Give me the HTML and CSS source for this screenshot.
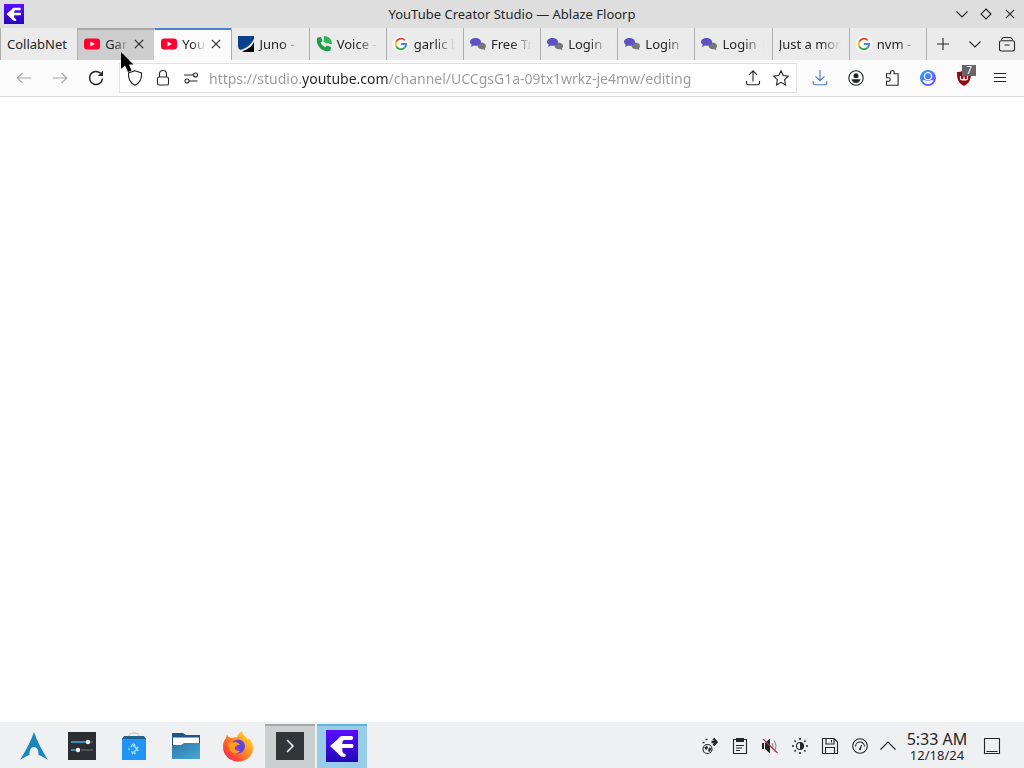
FILE: index.html
```
<!DOCTYPE html>
<html lang="en">

<head>
    <meta charset="utf-8">
    <meta name="viewport" content="width=device-width, initial-scale=1.0">
    <title>YouTube Creator Studio — Ablaze Floorp</title>

    <link rel="stylesheet" href="styles.css">

</head>

<body>

    <!-- shared icons -->
    <svg class="sprite" aria-hidden="true">
        <defs>
            <linearGradient id="floorp-bg" x1="0" y1="0" x2="0" y2="1">
                <stop offset="0" stop-color="#5a0cff" />
                <stop offset="1" stop-color="#2408b8" />
            </linearGradient>
            <symbol id="floorp" viewBox="0 0 32 32">
                <path fill="url(#floorp-bg)" d="M0 0h32v32H0z" />
                <path fill="#fff" d="M4 16 12 9C13.500 6.500 15 6 17.500 6h8.500q2.500 1.800 0 4H18.500c-1.500 0-2.200 1-2.200 4h10.200q2 2 0 4H16.300v2c0 2.500 1 3.400 2.700 3.800 1.500 1.500.5 3.700-1.500 3.200-3-.5-4.500-1.800-5.500-3.500z" />
            </symbol>
            <symbol id="youtube" viewBox="0 0 16 16">
                <rect y="2.500" width="16" height="11" rx="3" fill="#ff0033" />
                <path fill="#fff" d="M6.500 5.500v5L10.800 8z" />
            </symbol>
            <symbol id="google" viewBox="0 0 16 16">
                <circle cx="8" cy="8" r="8" fill="#fff" />
                <g fill="none" stroke-width="1.900">
                    <path stroke="#ea4335" d="M3.200 5.700A5.200 5.200 0 0 1 11.800 4.400" />
                    <path stroke="#fbbc05" d="M3.200 10.300a5.200 5.200 0 0 1 0-4.600" />
                    <path stroke="#34a853" d="M11.500 11.800A5.200 5.200 0 0 1 3.200 10.300" />
                    <path stroke="#4285f4" d="M8 8h5.100c0 1.700-.5 2.900-1.600 3.800" />
                </g>
            </symbol>
            <symbol id="chat" viewBox="0 0 16 16">
                <path fill="#777" d="M11 6.500c3 0 5 1.500 5 3.500 0 1-.5 1.800-1.200 2.400L15.500 14 13 13.200c-3 .3-5.500-1.200-5.500-3.200S9 6.500 11 6.500z" />
                <path fill="#5f51c4" d="M5.500 2C8.600 2 11 3.600 11 5.900S8.600 9.700 5.500 9.700L4 9.600 1.200 11l.4-2.600C.6 7.700 0 6.900 0 5.900 0 3.600 2.400 2 5.500 2z" />
            </symbol>
            <symbol id="close" viewBox="0 0 16 16">
                <path d="m3.800 3.800 8.400 8.400m0-8.400-8.400 8.400" />
            </symbol>
            <symbol id="down" viewBox="0 0 16 16">
                <path d="m2.500 5.500 5.500 5.500 5.500-5.500" />
            </symbol>
        </defs>
    </svg>

    <header class="titlebar">
        <svg class="app-icon"><use href="#floorp" /></svg>
        <h1>YouTube Creator Studio — Ablaze Floorp</h1>
        <div class="window-buttons">
            <button class="window-button" aria-label="Minimize"><svg class="icon"><use href="#down" /></svg></button>
            <button class="window-button" aria-label="Maximize"><svg class="icon" viewBox="0 0 16 16"><path d="m8 3 5 5-5 5-5-5z" /></svg></button>
            <button class="window-button" aria-label="Close"><svg class="icon"><use href="#close" /></svg></button>
        </div>
    </header>

    <nav class="tabbar">
        <div class="tabs">
            <div class="tab"><button class="tab-name full">CollabNet</button></div>
            <div class="tab hovered">
                <button class="tab-name"><svg class="favicon"><use href="#youtube" /></svg><span>Gar</span></button>
                <button class="tab-close" aria-label="Close tab"><svg class="icon"><use href="#close" /></svg></button>
            </div>
            <div class="tab selected">
                <button class="tab-name"><svg class="favicon"><use href="#youtube" /></svg><span>You</span></button>
                <button class="tab-close" aria-label="Close tab"><svg class="icon"><use href="#close" /></svg></button>
            </div>
            <div class="tab">
                <button class="tab-name"><svg class="favicon" viewBox="0 0 16 16"><path fill="#0b408c" d="M0 0h16v3C12 10 8 12 2.500 14 .8 13 0 12 0 10z" /><path fill="#000" d="M16 6v10H7c-1 0-2-.3-3-.8C10 13.500 13.500 11 16 6z" /></svg><span>Juno -</span></button>
            </div>
            <div class="tab">
                <button class="tab-name"><svg class="favicon" viewBox="0 0 16 16"><path fill="#1f9d4b" d="M1.500 1.500 5 1l1.500 4-2 1.500c1 2 2.500 3.500 4.700 4.800L11 9.500l4 1.500-.5 3.500C8 17.500-1.500 10 1.500 1.500z" /><path fill="#2fb35b" d="M8 0c4.500 0 8 3.500 8 8h-2.500l-1-1-3 .5L9 6l-1.500.3z" /></svg><span>Voice -</span></button>
            </div>
            <div class="tab"><button class="tab-name"><svg class="favicon"><use href="#google" /></svg><span>garlic b</span></button></div>
            <div class="tab"><button class="tab-name"><svg class="favicon"><use href="#chat" /></svg><span>Free Tr</span></button></div>
            <div class="tab"><button class="tab-name"><svg class="favicon"><use href="#chat" /></svg><span>Login |</span></button></div>
            <div class="tab"><button class="tab-name"><svg class="favicon"><use href="#chat" /></svg><span>Login |</span></button></div>
            <div class="tab"><button class="tab-name"><svg class="favicon"><use href="#chat" /></svg><span>Login |</span></button></div>
            <div class="tab"><button class="tab-name"><span>Just a mom</span></button></div>
            <div class="tab"><button class="tab-name"><svg class="favicon"><use href="#google" /></svg><span>nvm -</span></button></div>
        </div>
        <button class="tab-tool" aria-label="New tab"><svg class="icon" viewBox="0 0 16 16"><path d="M8 2v12M2 8h12" /></svg></button>
        <button class="tab-tool" aria-label="List all tabs"><svg class="icon"><use href="#down" /></svg></button>
        <button class="tab-tool" aria-label="Recent tabs"><svg class="icon" viewBox="0 0 16 16"><path d="M2.500 3.800Q3 1.500 5 1.500h6q2 0 2.500 2.300M2.200 4.800h11.600q1.700 0 1.700 1.700v6.800q0 1.700-1.700 1.700H2.200q-1.700 0-1.700-1.700V6.500q0-1.700 1.700-1.700zM5.500 9h5" /></svg></button>
    </nav>

    <div class="toolbar">
        <button class="tool faded" aria-label="Back"><svg class="icon" viewBox="0 0 16 16"><path d="M15.500 8H1.200M6.500 3 1.200 8l5.300 5" /></svg></button>
        <button class="tool faded" aria-label="Forward"><svg class="icon" viewBox="0 0 16 16"><path d="M.5 8h14.300M9.500 3l5.300 5-5.300 5" /></svg></button>
        <button class="tool" aria-label="Reload"><svg class="icon bold" viewBox="0 0 16 16"><path d="M14.500 8.500A6.500 6.500 0 1 1 12.500 3.300" /><path class="solid" d="M15 .800V6H9.800z" /></svg></button>

        <form class="urlbar">
            <button type="button" class="url-tool" aria-label="Tracking protection"><svg class="icon" viewBox="0 0 16 16"><path d="M8 .700 14.500 3c.5 5.500-1.500 9.700-6.500 12.300C3 12.700 1 8.500 1.500 3z" /></svg></button>
            <button type="button" class="url-tool" aria-label="Site information"><svg class="icon" viewBox="0 0 16 16"><rect x="2.500" y="7" width="11" height="8" rx="1.500" /><path d="M4.500 7V4a3.500 3.500 0 0 1 7 0v3" /></svg></button>
            <button type="button" class="url-tool" aria-label="Permissions"><svg class="icon" viewBox="0 0 16 16"><circle cx="12.500" cy="5" r="2" /><circle cx="4" cy="11" r="2" /><path d="M1 5h9.500M6 11h8.500" /></svg></button>
            <input class="url" type="text" aria-label="Address" spellcheck="false" value="https://studio.youtube.com/channel/UCCgsG1a-09tx1wrkz-je4mw/editing">
            <button type="button" class="url-tool" aria-label="Share"><svg class="icon" viewBox="0 0 16 16"><path d="M8 11.500V.8M4 4.800l4-4 4 4M1.500 11v2q0 1.700 1.700 1.700h9.600q1.700 0 1.700-1.700v-2" /></svg></button>
            <button type="button" class="url-tool" aria-label="Bookmark"><svg class="icon" viewBox="0 0 16 16"><path d="m8 .8 2.200 4.700 5.100.6-3.700 3.500.9 5.300L8 12.300l-4.500 2.600.9-5.300L.7 6.100l5.100-.6z" /></svg></button>
        </form>

        <button class="tool download" aria-label="Downloads"><svg class="icon" viewBox="0 0 16 16"><path d="M8 0v10.500M3.500 6.300 8 10.700l4.500-4.400M1.200 11v2q0 1.700 1.700 1.700h10.200q1.700 0 1.700-1.700v-2" /></svg></button>
        <button class="tool" aria-label="Account"><svg class="icon" viewBox="0 0 16 16"><circle cx="8" cy="8" r="7.200" /><circle class="solid" cx="8" cy="5.800" r="2.500" /><path class="solid" d="M3.500 9.300h9c-.5 2.400-2.200 3.700-4.500 3.700s-4-1.300-4.500-3.700z" /></svg></button>
        <button class="tool" aria-label="Extensions"><svg class="icon" viewBox="0 0 16 16"><path d="M2.500 6.500V3.800h4V2.300a1.800 1.800 0 0 1 3.600 0v1.500h4v11.400H2.500v-4h2a1.700 1.700 0 0 0 0-3.500h-2z" /></svg></button>
        <button class="tool" aria-label="Profile">
            <svg class="avatar" viewBox="0 0 16 16">
                <linearGradient id="profile-bg" x1="0" y1="0" x2="1" y2="1">
                    <stop offset="0" stop-color="#16a9ff" />
                    <stop offset="1" stop-color="#8743ff" />
                </linearGradient>
                <circle cx="8" cy="8" r="8" fill="url(#profile-bg)" />
                <circle cx="8" cy="6.300" r="3.600" fill="none" stroke="#fff" stroke-width="1.300" />
                <path fill="#fff" d="M2.500 10.500q2.500-1 3 0 2.500 1 5 0 .5-1 3 0C12.500 12.800 10.500 14 8 14s-4.500-1.200-5.500-3.500z" />
            </svg>
        </button>
        <button class="tool ublock" aria-label="uBlock Origin">
            <svg class="avatar" viewBox="0 0 16 16">
                <path fill="#900a13" d="M8 0c2 1.500 4 2 7 2 0 7-1 11-7 14C2 13 1 9 1 2c3 0 5-.5 7-2z" />
                <path fill="none" stroke="#fff" stroke-width="1.200" d="M4.500 6v2.200a1.700 1.700 0 0 0 3.500 0V6.500v1.700a1.700 1.700 0 0 0 3.500 0V6" />
            </svg>
            <span class="badge">7</span>
        </button>
        <button class="tool" aria-label="Menu"><svg class="icon" viewBox="0 0 16 16"><path d="M2 3.500h12M2 7.500h12M2 11.500h12" /></svg></button>
    </div>

    <main class="page"></main>

    <footer class="panel">
        <button class="launcher" aria-label="Application launcher">
            <svg class="app" viewBox="0 0 32 32"><path fill="#1d85bd" d="M16 2c3 8 7 17 14 28-4-2.500-6.500-4-9.500-5 .3-5-1.500-8-4.500-8s-4.800 3-4.500 8c-3 1-5.500 2.500-9.500 5C9 19 13 10 16 2z" /></svg>
        </button>
        <div class="tasks">
            <button class="task" aria-label="System Settings">
                <svg class="app" viewBox="0 0 32 32"><path fill="#2b2f34" d="M2 2h28v28H2z" /><path stroke="#3daee9" stroke-width="1.500" d="M5 12h15M5 20h7" /><path stroke="#75797d" d="M24 12h3M15 20h12" /><circle cx="22" cy="12" r="2.200" fill="#fff" /><circle cx="12" cy="20" r="2.200" fill="#fff" /></svg>
            </button>
            <button class="task" aria-label="Discover">
                <svg class="app" viewBox="0 0 32 32">
                    <path fill="none" stroke="#b4b9bd" d="M11 8V5.500Q11 3 16 3t5 2.500V8" />
                    <path fill="#2294f5" d="M4 8h24v22H4z" />
                    <path fill="#20648f" d="M6 6h20l2 3H4z" />
                    <g fill="none" stroke="#9bdcff" stroke-width="1.500"><path d="m14 14 5 5-5 5" /><path stroke-dasharray="2 2" d="m16 14 5 5-5 5-5-5z" /></g>
                </svg>
            </button>
            <button class="task" aria-label="Files">
                <svg class="app" viewBox="0 0 32 32">
                    <linearGradient id="folder-front" x1="0" y1="0" x2="1" y2="1">
                        <stop offset="0" stop-color="#2e76aa" />
                        <stop offset="1" stop-color="#4aa8d3" />
                    </linearGradient>
                    <path fill="#1f5584" d="M2 3h11l3 2h14v13H2z" /><path fill="#fff" d="M3 7.500h26V17H3z" /><path fill="url(#folder-front)" d="M2 15h9l3-2h16v16H2z" />
                </svg>
            </button>
            <button class="task" aria-label="Firefox">
                <svg class="app" viewBox="0 0 32 32">
                    <linearGradient id="fox" x1="1" y1="0" x2="0" y2="1">
                        <stop offset="0" stop-color="#fff14a" />
                        <stop offset=".4" stop-color="#ff9a1f" />
                        <stop offset=".75" stop-color="#ff4638" />
                        <stop offset="1" stop-color="#e52274" />
                    </linearGradient>
                    <path fill="url(#fox)" d="M5 4.500c1 2 2 3 4 3.500 2 0 3-1 6-1 1-3 3-5 5-6 0 4 4 5 6 9l.5-2C30 11 31 14 31 18c0 8-6.500 13.500-15 13.500S1 25 1 17c0-4 1-7 3-9z" />
                    <circle cx="16" cy="16.500" r="7" fill="#8f3dcc" />
                    <path fill="#5a46df" d="M16 10c6 0 8 6 5 10-1 2-3 3-5 3 3-3 2-6-1-7 0-3-1-4 1-6z" />
                    <path fill="#ff9e18" d="M6 13c3-1 5 0 7-1 2 0 4 1 5 3-3-.5-4 1-5 2-1 3 2 4 5 4-4 5-12 2-12-8z" />
                </svg>
            </button>
            <button class="task open" aria-label="Konsole">
                <svg class="app" viewBox="0 0 32 32"><path fill="#31363b" d="M2 2h28v28H2z" /><path fill="none" stroke="#fff" stroke-width="1.500" d="m13 10 6 6-6 6" /></svg>
            </button>
            <button class="task current" aria-label="Floorp"><svg class="app"><use href="#floorp" /></svg></button>
        </div>

        <div class="tray">
            <button class="tray-item" aria-label="Updates"><svg class="icon" viewBox="0 0 16 16"><circle cx="5.500" cy="11" r="4.500" /><path class="solid" d="m2.500 9 2.500-1 1 1.500L4.500 12 3 11zM7 9.500l2.500 1L7.500 14l-1.500-1z" /><path stroke-width="2.400" d="m11.500.500 3 3.500-3 3.500M9.500 4h5" /><path stroke-width="1.600" d="M.5 4.500h2M3.500 1.500h2" /></svg></button>
            <button class="tray-item" aria-label="Clipboard"><svg class="icon" viewBox="0 0 16 16"><path d="M1.500 1.500h13v14h-13zM4 7.500h8M4 10h6M4 12.500h4" /><path class="solid" d="M4 0h8v4H4z" /></svg></button>
            <button class="tray-item" aria-label="Volume muted"><svg class="icon" viewBox="0 0 16 16"><path class="solid" d="M0 5h2v6H0zM3 5l5-4.500v15L3 11z" /><path stroke="#888" d="M10 5q2 3 0 6M12 2.500q4 5.500 0 11" /><path stroke="#a53b45" d="m1 1 14.500 14" /></svg></button>
            <button class="tray-item" aria-label="Brightness"><svg class="icon" viewBox="0 0 16 16"><circle cx="8" cy="8" r="3.500" /><path class="solid" d="M8 4.500v7a3.500 3.500 0 0 0 0-7z" /><path stroke-width="1.600" d="M8 0v2M8 14v2M0 8h2M14 8h2M2.500 2.500l1.200 1.200M12.300 12.300l1.200 1.200M2.500 13.500l1.200-1.200M12.300 3.700l1.200-1.200" /></svg></button>
            <button class="tray-item" aria-label="Disks"><svg class="icon" viewBox="0 0 16 16"><path d="M.500.500h11.500l3.500 3.500v11.500H.500zM4 1v5h8V1M9.500 2v2.500M3.500 15V9.500h9V15" /></svg></button>
            <button class="tray-item" aria-label="Power profile"><svg class="icon" viewBox="0 0 16 16"><circle cx="8" cy="8" r="7.300" /><path d="M3.500 8.500a4.500 4.500 0 0 1 9 0M8 12l1.500-5" /><circle class="solid" cx="8" cy="11" r="1" /></svg></button>
            <button class="tray-item arrow" aria-label="Show hidden icons"><svg class="icon" viewBox="0 0 16 16"><path d="m.500 11.500 7.500-7.500 7.500 7.500" /></svg></button>
            <button class="clock">
                <span class="time">5:33 AM</span>
                <span class="date">12/18/24</span>
            </button>
            <button class="desktop" aria-label="Show desktop"><svg class="icon" viewBox="0 0 16 16"><path d="M.500.500h15v15H.500zM2.500 13.500h11" /></svg></button>
        </div>
    </footer>

    <svg class="pointer" viewBox="0 0 14 22" aria-hidden="true"><path d="M1 0v17l4-3.500L8 20l3.500-1.500L9 12.500h4.500z" /></svg>

</body>

</html>
```
FILE: styles.css
```
* {
    box-sizing: border-box;
}

body {
    margin: 0;
    min-height: 100vh;
    display: flex;
    flex-direction: column;
    background-color: #fefefe;
    color: #232629;
    font-family: "Noto Sans", sans-serif;
    font-size: 13px;
}

button,
input {
    margin: 0;
    padding: 0;
    border: 0;
    background: none;
    color: inherit;
    font: inherit;
}

button {
    display: flex;
    align-items: center;
    justify-content: center;
}

svg {
    flex: none;
}

.sprite {
    position: absolute;
    width: 0;
    height: 0;
}

.icon {
    width: 16px;
    height: 16px;
    fill: none;
    stroke: currentColor;
    stroke-width: 1.1;
    overflow: visible;
}

.bold {
    stroke-width: 1.5;
}

.solid {
    fill: currentColor;
    stroke: none;
}

/* window title */

.titlebar {
    height: 28px;
    padding: 0 2px 0 4px;
    display: flex;
    align-items: center;
    background-color: #dedede;
}

.app-icon {
    width: 20px;
    height: 20px;
}

h1 {
    flex: 1;
    margin: 0;
    padding-left: 50px;
    text-align: center;
    font-size: 13px;
    font-weight: normal;
}

.window-buttons {
    display: flex;
}

.window-button {
    width: 24px;
    height: 28px;
}

/* tabs */

.tabbar {
    height: 32px;
    padding-right: 1px;
    display: flex;
    background-color: #ebebeb;
}

.tabs {
    flex: 1;
    min-width: 0;
    display: grid;
    grid-template-columns: repeat(12, minmax(0, 1fr));
    border-right: 1px solid #adadad;
}

.tab {
    display: flex;
    padding: 0 8px 0 6px;
    border-left: 1px solid #adadad;
}

.tab-name {
    flex: 1;
    min-width: 0;
    justify-content: flex-start;
    gap: 5px;
    overflow: hidden;
    white-space: nowrap;
    mask-image: linear-gradient(to left, transparent, black 20px);
}

.full {
    overflow: visible;
    mask-image: none;
}

.favicon {
    width: 16px;
    height: 16px;
}

.hovered,
.selected {
    padding-right: 5px;
    border-top: 2px solid #a9a9a9;
    background-color: #cecece;
}

.selected {
    border-top-color: #4a80d0;
    border-left-color: #fbfbfb;
    background-color: #fbfbfb;
}

.hovered .tab-name,
.selected .tab-name {
    padding-bottom: 2px;
    mask-image: linear-gradient(to left, transparent, black 14px);
}

.tab-close {
    width: 20px;
    padding-bottom: 2px;
}

.tab-tool {
    width: 32px;
}

/* address bar */

.toolbar {
    height: 37px;
    padding: 0 6px;
    display: flex;
    align-items: center;
    background-color: #fbfbfb;
    border-bottom: 1px solid #dcdcdc;
}

.tool {
    position: relative;
    width: 36px;
    height: 36px;
}

.faded {
    color: #a8a8a8;
}

.download {
    color: #4a78d0;
}

.avatar {
    width: 16px;
    height: 16px;
}

.badge {
    position: absolute;
    top: 5px;
    right: 6px;
    width: 14px;
    height: 11px;
    background-color: #666;
    color: white;
    font-size: 10px;
    line-height: 11px;
    text-align: center;
}

.urlbar {
    flex: 1;
    min-width: 0;
    height: 30px;
    margin: 0 5px;
    padding: 0 1px;
    display: flex;
    border: 1px solid #e2e2e2;
    background-color: white;
}

.url-tool {
    width: 28px;
}

/* only the domain is dark, the rest of the address is dimmed */
.url {
    flex: 1;
    min-width: 0;
    padding-left: 4px;
    font-size: 14px;
    color: transparent;
    background-image: linear-gradient(to right, #999 97px, #232629 97px, #232629 183px, #999 183px);
    background-clip: text;
    -webkit-background-clip: text;
}

.page {
    flex: 1;
}

/* desktop panel */

.panel {
    height: 46px;
    padding: 0 13px 0 11px;
    display: flex;
    justify-content: space-between;
    background-color: #eff0f1;
}

.launcher {
    width: 46px;
}

.tasks {
    flex: 1;
    display: flex;
    gap: 2px;
}

.task {
    width: 50px;
}

.app {
    width: 32px;
    height: 32px;
}

.launcher,
.task {
    padding-top: 2px;
}

.open,
.current {
    margin-top: 2px;
    padding: 0 0 2px;
    border-top: 2px solid #a4a7a8;
    background-color: #cbcfd0;
}

.current {
    border-top-color: #5fb4e2;
    background-color: #98cdea;
}

.tray {
    display: flex;
    padding-top: 2px;
}

.tray-item {
    width: 30px;
}

.arrow {
    width: 26px;
}

.clock {
    width: 72px;
    flex-direction: column;
}

.time {
    font-size: 16px;
    line-height: 18px;
}

.date {
    font-size: 13px;
    line-height: 14px;
}

.desktop {
    width: 38px;
}

.pointer {
    position: absolute;
    top: 52px;
    left: 120px;
    width: 14px;
    height: 22px;
}
```
